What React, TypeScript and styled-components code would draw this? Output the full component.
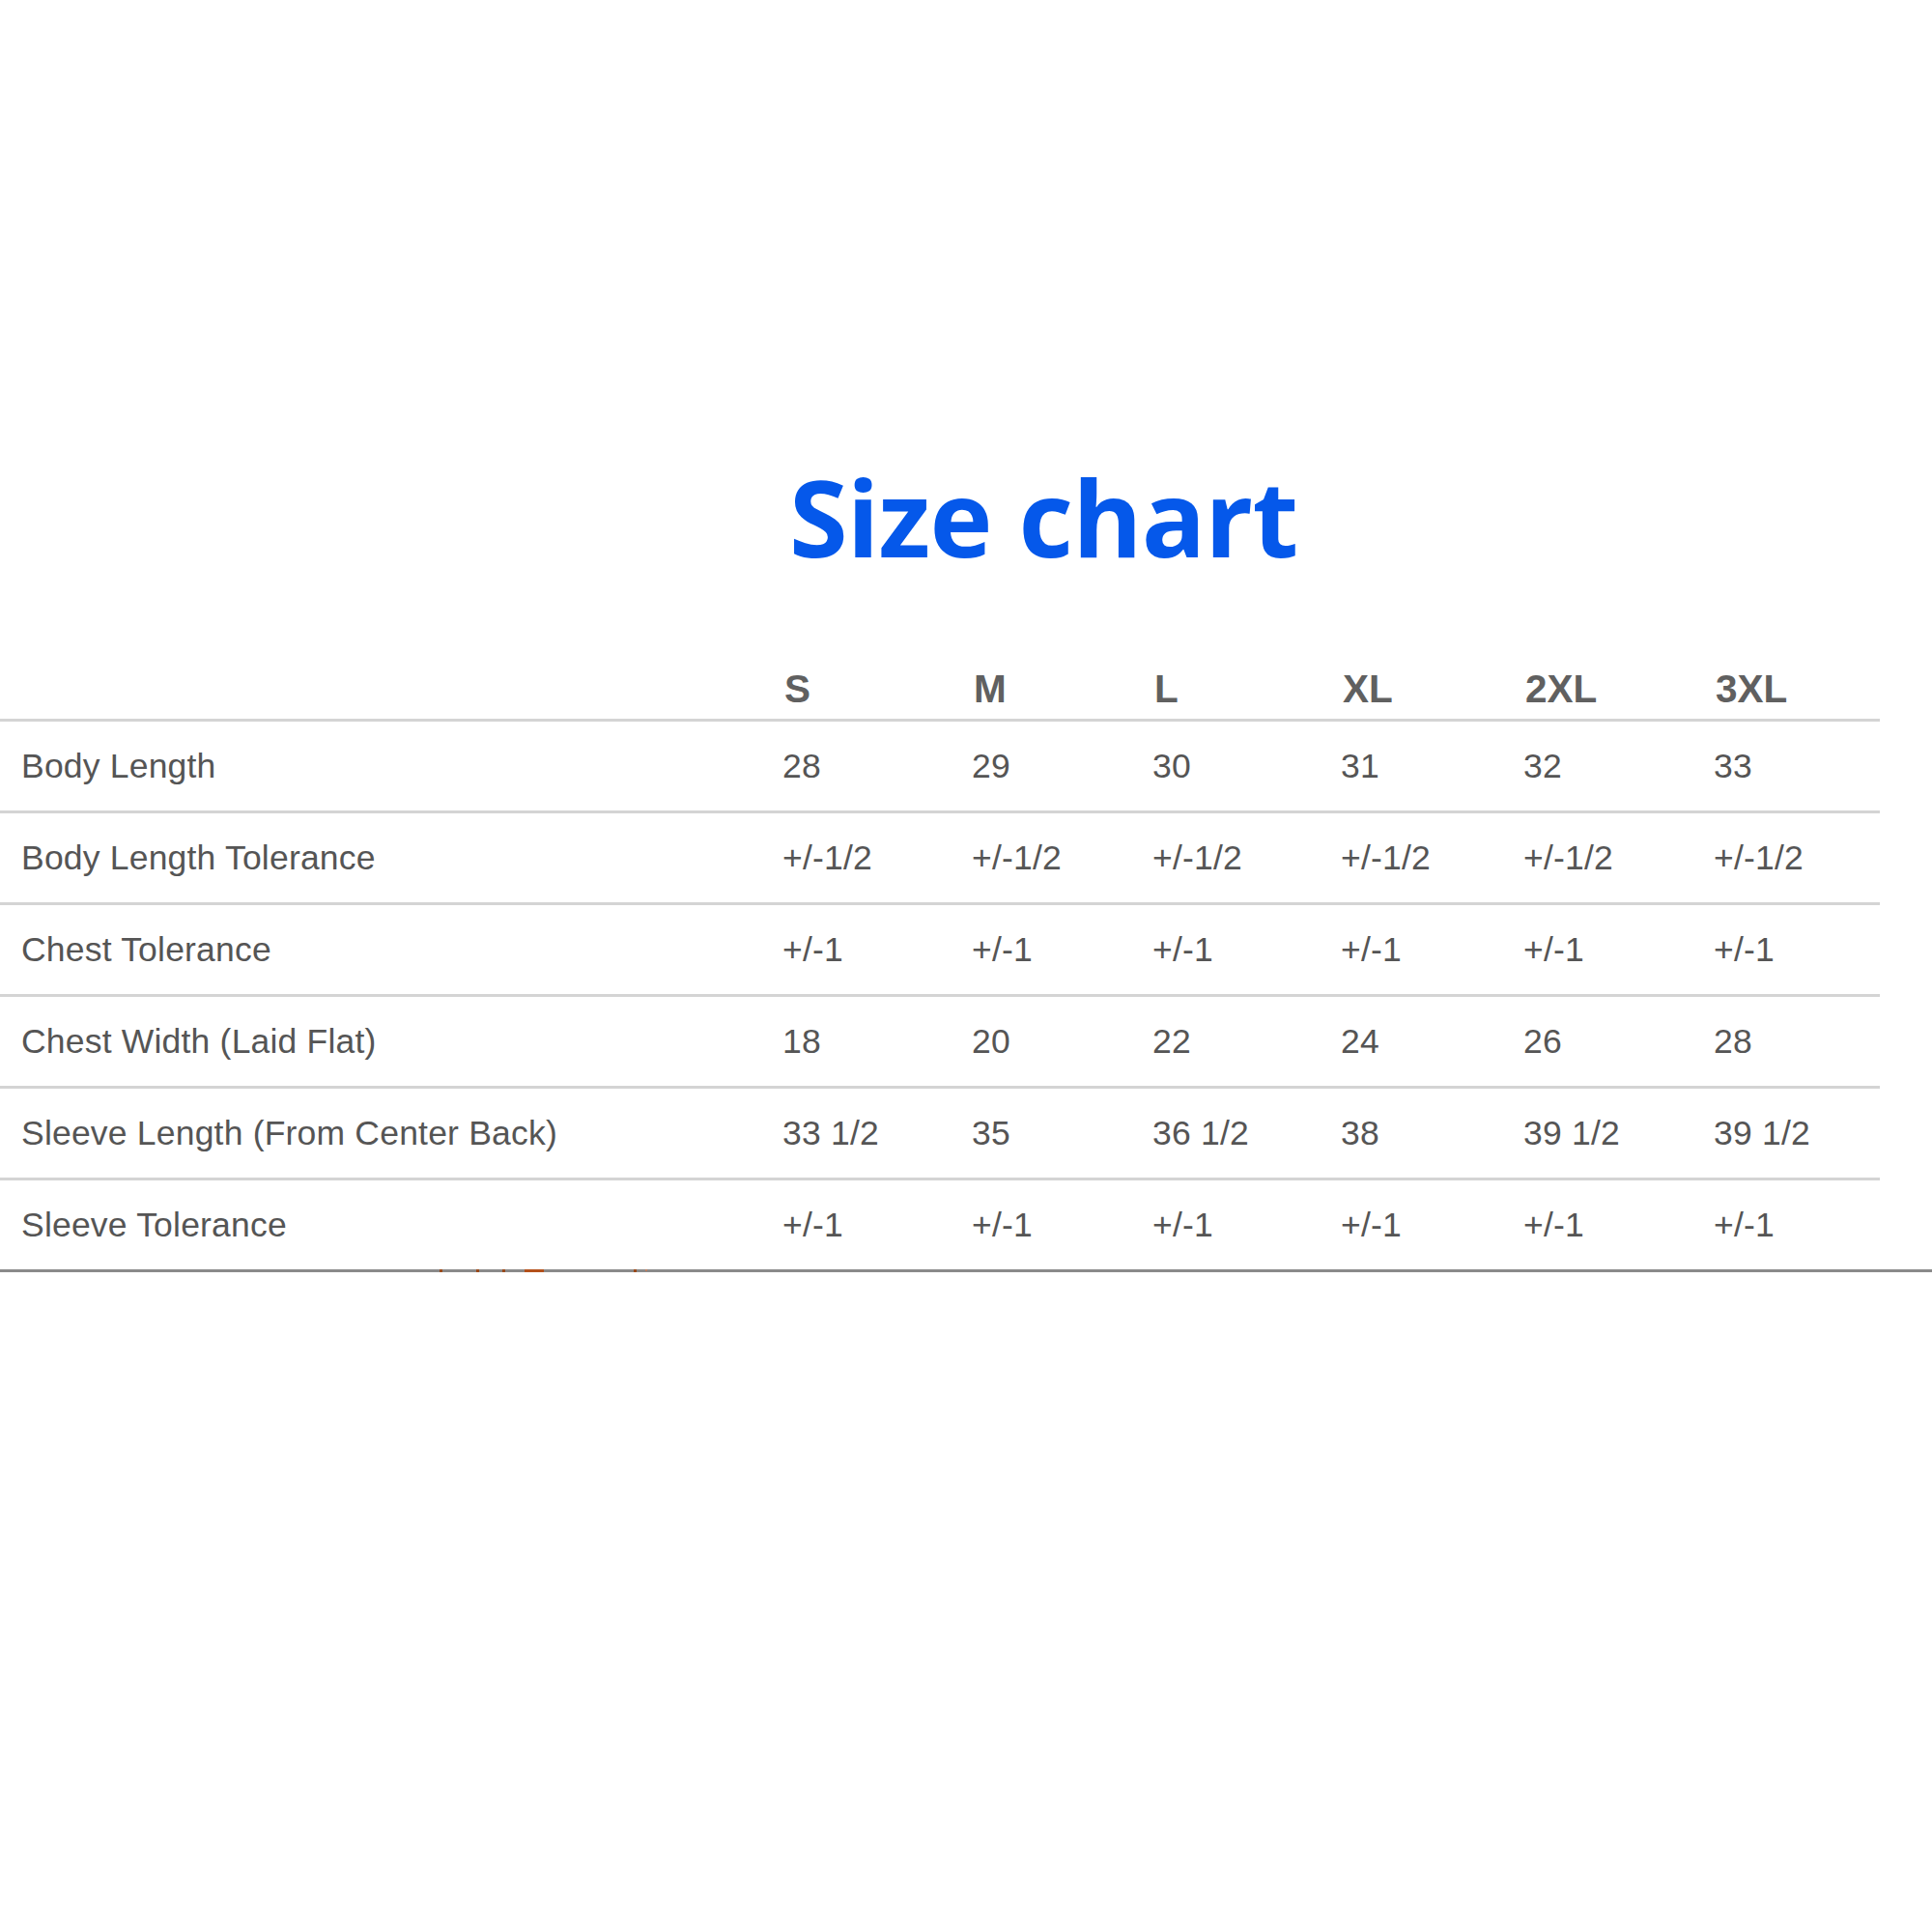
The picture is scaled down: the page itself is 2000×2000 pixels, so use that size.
import React from "react";
import styled, { createGlobalStyle } from "styled-components";

const GlobalStyle = createGlobalStyle`
  html, body {
    margin: 0;
    padding: 0;
    background: #ffffff;
  }
  body {
    font-family: "Liberation Sans", Arial, sans-serif;
  }
`;

const Page = styled.div`
  width: 2000px;
  height: 2000px;
  background: #ffffff;
  display: flex;
  flex-direction: column;
  padding-top: 478px;
  box-sizing: border-box;
`;

const Title = styled.h1`
  margin: 0 0 0 817px;
  height: 112px;
  font-family: "Open Sans", "Noto Sans", sans-serif;
  font-weight: 700;
  font-size: 110px;
  line-height: 112px;
  color: #0558ea;
  letter-spacing: -0.8px;
`;

const Table = styled.div`
  margin-top: 99px;
  width: 2000px;
  display: flex;
  flex-direction: column;
  border-bottom: 3px solid #8a8a8a;
  position: relative;
`;

const COLS = "788px 196px 187px 195px 189px 197px 194px";

const HeaderRow = styled.div`
  width: 1946px;
  display: grid;
  grid-template-columns: ${COLS};
  padding-bottom: 7px;
  border-bottom: 3px solid #d4d4d4;
`;

const HeadCell = styled.div`
  padding-left: 24px;
  font-family: "Liberation Sans", Arial, sans-serif;
  font-weight: 700;
  font-size: 40.5px;
  line-height: 48px;
  color: #606060;
`;

const Row = styled.div<{ $last?: boolean }>`
  width: 1946px;
  height: 92px;
  display: grid;
  grid-template-columns: ${COLS};
  border-bottom: ${(p) => (p.$last ? "none" : "3px solid #d4d4d4")};
`;

const Cell = styled.div`
  padding-left: 22px;
  font-family: "Liberation Sans", Arial, sans-serif;
  font-size: 35.5px;
  letter-spacing: 0.2px;
  line-height: 92px;
  color: #555555;
  white-space: nowrap;
`;

const Specks = styled.svg`
  position: absolute;
  left: 450px;
  bottom: -6px;
  width: 230px;
  height: 6px;
  overflow: visible;
`;

const sizes = ["S", "M", "L", "XL", "2XL", "3XL"];

const rows: [string, string[]][] = [
  ["Body Length", ["28", "29", "30", "31", "32", "33"]],
  ["Body Length Tolerance", ["+/-1/2", "+/-1/2", "+/-1/2", "+/-1/2", "+/-1/2", "+/-1/2"]],
  ["Chest Tolerance", ["+/-1", "+/-1", "+/-1", "+/-1", "+/-1", "+/-1"]],
  ["Chest Width (Laid Flat)", ["18", "20", "22", "24", "26", "28"]],
  ["Sleeve Length (From Center Back)", ["33 1/2", "35", "36 1/2", "38", "39 1/2", "39 1/2"]],
  ["Sleeve Tolerance", ["+/-1", "+/-1", "+/-1", "+/-1", "+/-1", "+/-1"]],
];

export default function App() {
  return (
    <>
      <GlobalStyle />
      <Page>
        <Title>Size chart</Title>
        <Table>
          <HeaderRow>
            <HeadCell />
            {sizes.map((s) => (
              <HeadCell key={s}>{s}</HeadCell>
            ))}
          </HeaderRow>
          {rows.map(([label, vals], i) => (
            <Row key={label} $last={i === rows.length - 1}>
              <Cell>{label}</Cell>
              {vals.map((v, j) => (
                <Cell key={j}>{v}</Cell>
              ))}
            </Row>
          ))}
          <Specks viewBox="0 0 230 6">
            <rect x="5" y="0" width="3" height="3" fill="#9a4a1a" />
            <rect x="43" y="0" width="3" height="3" fill="#9a4a1a" />
            <rect x="70" y="0" width="3" height="3" fill="#9a4a1a" />
            <rect x="93" y="0" width="20" height="3" fill="#b4501a" />
            <rect x="206" y="0" width="3" height="3" fill="#9a4a1a" />
            <rect x="218" y="0" width="2" height="2" fill="#c08060" />
          </Specks>
        </Table>
      </Page>
    </>
  );
}
